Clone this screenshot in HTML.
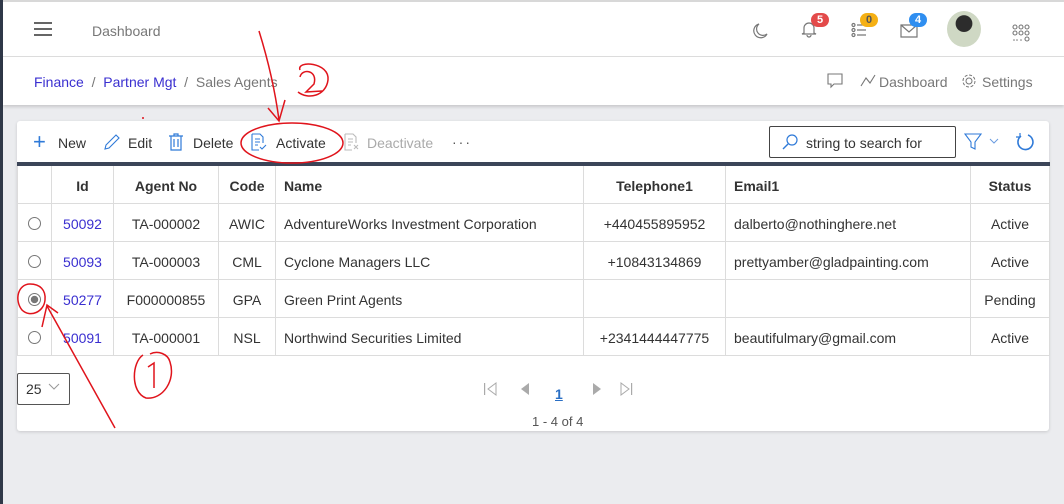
<!DOCTYPE html>
<html><head><meta charset="utf-8"><style>
*{box-sizing:border-box;margin:0;padding:0}
body{width:1064px;height:504px;overflow:hidden;background:#ebecef;font-family:"Liberation Sans",sans-serif;position:relative;color:#333}
.lb{position:absolute;left:0;top:0;width:3px;height:504px;background:#2f3848}
.top{position:absolute;left:3px;top:0;width:1061px;height:57px;background:#fff;border-top:2px solid #d8d8d8;border-bottom:1px solid #ddd}
.bc{position:absolute;left:3px;top:57px;width:1061px;height:48px;background:#fff;box-shadow:0 2px 3px rgba(0,0,0,.15)}
.t{position:absolute;white-space:nowrap;font-size:14px}
.card{position:absolute;left:17px;top:121px;width:1032px;height:310px;background:#fff;border-radius:3px;box-shadow:0 1px 3px rgba(0,0,0,.15)}
table{position:absolute;left:17px;top:162px;border-collapse:collapse;font-size:14px;border-top:4px solid #3b4558}
td,th{border:1px solid #dcdcdc;height:38px;text-align:center;color:#333;padding-top:3px}
th{height:39px;font-weight:bold}
td.l,th.l{text-align:left;padding-left:8px}
a{color:#3a2fd0;text-decoration:none}
.badge{position:absolute;width:18px;height:14px;border-radius:7px;color:#fff;font-size:11px;font-weight:bold;text-align:center;line-height:14px}
.rad{display:inline-block;width:13px;height:13px;border:1px solid #777;border-radius:50%;vertical-align:middle;margin-top:-3px}
</style></head><body>
<div class="lb"></div>
<div class="top">
<div style="position:absolute;left:31px;top:20px;width:18px;height:2px;background:#666;box-shadow:0 6px 0 #666,0 12px 0 #666"></div>
<div class="t" style="left:89px;top:21px;color:#777">Dashboard</div>
<svg style="position:absolute;left:748px;top:20px" width="18" height="18"><path d="M8 2 A7 7 0 1 0 16 12 A6 6 0 0 1 8 2Z" fill="none" stroke="#777" stroke-width="1.2"/></svg>
<svg style="position:absolute;left:798px;top:18px" width="16" height="18"><path d="M3 13 L3 8 A5 5 0 0 1 13 8 L13 13 L15 14 L1 14 L3 13Z M6 15 A2 2 0 0 0 10 15" fill="none" stroke="#777" stroke-width="1.2"/></svg>
<div class="badge" style="left:808px;top:11px;background:#e34a4a">5</div>
<svg style="position:absolute;left:848px;top:20px" width="16" height="16"><g fill="none" stroke="#777" stroke-width="1.2"><circle cx="2.5" cy="3" r="1.5"/><circle cx="2.5" cy="8" r="1.5"/><circle cx="2.5" cy="13" r="1.5"/><path d="M6 3H15M6 8H15M6 13H15"/></g></svg>
<div class="badge" style="left:857px;top:11px;background:#f5b014;color:#555">0</div>
<svg style="position:absolute;left:897px;top:22px" width="18" height="14"><path d="M1 1H17V13H1Z M1 1L9 8L17 1" fill="none" stroke="#777" stroke-width="1.2"/></svg>
<div class="badge" style="left:906px;top:11px;background:#2f8ef0">4</div>
<div style="position:absolute;left:944px;top:9px;width:34px;height:36px;border-radius:50%;background:radial-gradient(circle at 50% 35%,#2c2c2c 0 28%,#cfd8c4 30%)"></div>
<svg style="position:absolute;left:1009px;top:22px" width="20" height="20"><g fill="none" stroke="#777" stroke-width="1.1"><circle cx="3" cy="3" r="2"/><circle cx="9" cy="3" r="2"/><circle cx="15" cy="3" r="2"/><circle cx="3" cy="9" r="2"/><circle cx="9" cy="9" r="2"/><circle cx="15" cy="9" r="2"/><circle cx="15" cy="15" r="2"/></g><g fill="#777"><circle cx="2" cy="16" r=".8"/><circle cx="5" cy="16" r=".8"/><circle cx="9" cy="16" r=".8"/></g></svg>
</div>
<div class="bc">
<div class="t" style="left:31px;top:17px;color:#777"><a>Finance</a> &nbsp;/&nbsp; <a>Partner Mgt</a> &nbsp;/&nbsp; Sales Agents</div>
<svg style="position:absolute;left:824px;top:16px" width="16" height="16"><path d="M1 1H15V11H7L4 14V11H1Z" fill="none" stroke="#777" stroke-width="1.1"/></svg>
<svg style="position:absolute;left:856px;top:16px" width="18" height="16"><path d="M2 13L7 5L11 10L16 2" fill="none" stroke="#777" stroke-width="1.1"/></svg>
<div class="t" style="left:876px;top:17px;color:#777">Dashboard</div>
<svg style="position:absolute;left:958px;top:16px" width="16" height="16"><circle cx="8" cy="8" r="3" fill="none" stroke="#777"/><circle cx="8" cy="8" r="6" fill="none" stroke="#777" stroke-dasharray="3 1.7"/></svg>
<div class="t" style="left:979px;top:17px;color:#777">Settings</div>
</div>
<div class="card"></div>
<div class="t" style="left:33px;top:133px;color:#2f7ad8;font-size:22px;line-height:18px">+</div>
<div class="t" style="left:58px;top:135px">New</div>
<svg style="position:absolute;left:103px;top:133px" width="18" height="18"><path d="M2 16L3 12L13 2L16 5L6 15Z" fill="none" stroke="#2f7ad8" stroke-width="1.1"/></svg>
<div class="t" style="left:128px;top:135px">Edit</div>
<svg style="position:absolute;left:168px;top:133px" width="16" height="18"><path d="M1 3H15M6 3V1H10V3M3 3V17H13V3M6 6V14M10 6V14" fill="none" stroke="#2f7ad8" stroke-width="1.2"/></svg>
<div class="t" style="left:193px;top:135px">Delete</div>
<svg style="position:absolute;left:250px;top:133px" width="18" height="18"><path d="M2 1H10L13 4V10M2 1V17H9M5 6H10M5 9H10M5 12H8M10 14L12 16L16 12" fill="none" stroke="#2f7ad8" stroke-width="1.1"/></svg>
<div class="t" style="left:276px;top:135px">Activate</div>
<svg style="position:absolute;left:343px;top:133px" width="18" height="18"><path d="M2 1H10L13 4V10M2 1V17H9M5 6H10M5 9H10M5 12H8M11 12L15 16M15 12L11 16" fill="none" stroke="#bbb" stroke-width="1.1"/></svg>
<div class="t" style="left:367px;top:135px;color:#aaa">Deactivate</div>
<div class="t" style="left:452px;top:134px;color:#555;letter-spacing:2px">···</div>
<div style="position:absolute;left:769px;top:126px;width:187px;height:32px;border:1px solid #444;border-radius:2px"></div>
<svg style="position:absolute;left:781px;top:133px" width="18" height="18"><circle cx="11" cy="7" r="5" fill="none" stroke="#2f7ad8" stroke-width="1.2"/><path d="M7 11L2 16" stroke="#2f7ad8" stroke-width="1.4"/></svg>
<div class="t" style="left:806px;top:135px">string to search for</div>
<svg style="position:absolute;left:964px;top:133px" width="40" height="18"><path d="M1 1H17L11 9V16L7 14V9Z" fill="none" stroke="#2f7ad8" stroke-width="1.1"/><path d="M26 6L30 10L34 6" fill="none" stroke="#6a9be0" stroke-width="1"/></svg>
<svg style="position:absolute;left:1015px;top:132px" width="20" height="20"><path d="M6 4A7.5 7.5 0 1 0 13 3" fill="none" stroke="#2f7ad8" stroke-width="1.6"/><path d="M5 1V5H1" fill="none" stroke="#2f7ad8" stroke-width="1.2"/></svg>
<table>
<tr><th style="width:34px"></th><th style="width:62px">Id</th><th style="width:105px">Agent No</th><th style="width:57px">Code</th><th class="l" style="width:308px">Name</th><th style="width:142px">Telephone1</th><th class="l" style="width:245px">Email1</th><th style="width:79px">Status</th></tr>
<tr><td><span class="rad"></span></td><td><a>50092</a></td><td>TA-000002</td><td>AWIC</td><td class="l">AdventureWorks Investment Corporation</td><td>+440455895952</td><td class="l">dalberto@nothinghere.net</td><td>Active</td></tr>
<tr><td><span class="rad"></span></td><td><a>50093</a></td><td>TA-000003</td><td>CML</td><td class="l">Cyclone Managers LLC</td><td>+10843134869</td><td class="l">prettyamber@gladpainting.com</td><td>Active</td></tr>
<tr><td><span class="rad" style="background:radial-gradient(circle,#777 0 45%,#fff 50%)"></span></td><td><a>50277</a></td><td>F000000855</td><td>GPA</td><td class="l">Green Print Agents</td><td></td><td class="l"></td><td>Pending</td></tr>
<tr><td><span class="rad"></span></td><td><a>50091</a></td><td>TA-000001</td><td>NSL</td><td class="l">Northwind Securities Limited</td><td>+2341444447775</td><td class="l">beautifulmary@gmail.com</td><td>Active</td></tr>
</table>
<div style="position:absolute;left:17px;top:373px;width:53px;height:32px;border:1px solid #555;border-radius:2px"></div>
<div class="t" style="left:26px;top:381px">25</div>
<svg style="position:absolute;left:48px;top:383px" width="12" height="8"><path d="M1 1L6 6L11 1" fill="none" stroke="#999"/></svg>
<svg style="position:absolute;left:483px;top:381px" width="160" height="16"><g fill="#aaa"><rect x="1" y="2" width="1.2" height="12"/><path d="M13 2V14L5 8Z" fill="none" stroke="#aaa"/><path d="M46 2V14L38 8Z"/><path d="M110 2V14L118 8Z"/><path d="M138 2V14L146 8Z" fill="none" stroke="#aaa"/><rect x="148" y="2" width="1.2" height="12"/></g></svg>
<div class="t" style="left:555px;top:386px;color:#2a6fc4;font-weight:bold;text-decoration:underline">1</div>
<div class="t" style="left:532px;top:414px;font-size:13px;color:#555">1 - 4 of 4</div>
<svg style="position:absolute;left:0;top:0" width="1064" height="504"><g fill="none" stroke="#e0141c" stroke-width="1.5">
<path d="M259 31C268 60 275 90 279 120M268 108L279 121L285 100"/>
<ellipse cx="292" cy="143" rx="51" ry="20"/>
<path d="M300 70C296 60 330 62 328 80C326 96 308 100 298 92M300 77C302 68 318 70 314 84L306 92L322 91"/>
<path d="M30 284C18 284 14 300 22 310C30 318 44 312 45 300C46 290 40 284 30 284"/>
<path d="M115 428L47 306M42 327L47 305L58 313"/>
<path d="M143 355C132 362 130 392 146 398C163 400 176 380 170 362C168 354 158 350 150 354M148 367L154 363V388"/>
</g><circle cx="143" cy="118" r="1" fill="#e0141c"/></svg>
</body></html>
